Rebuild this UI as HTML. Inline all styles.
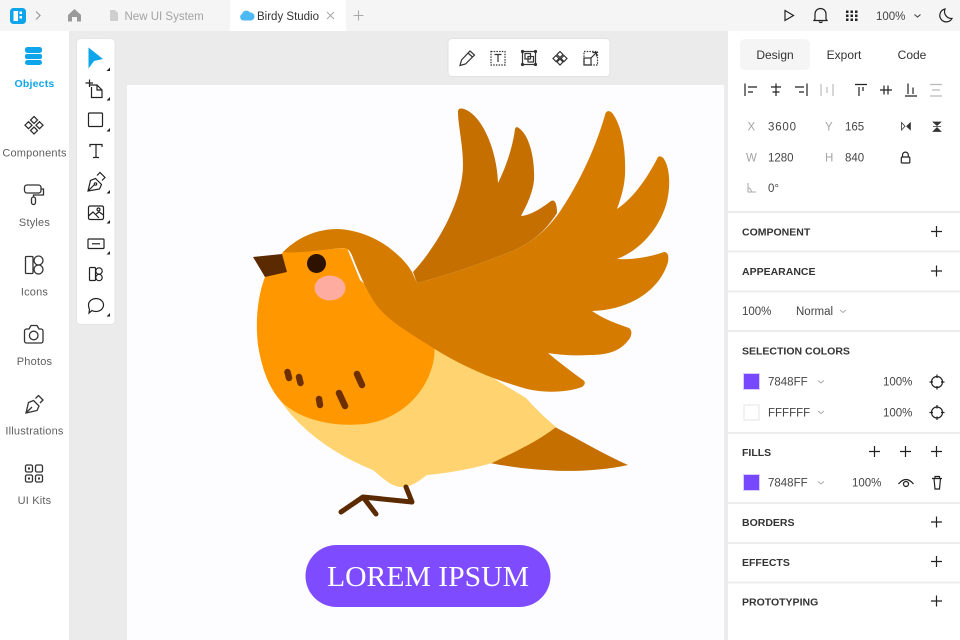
<!DOCTYPE html>
<html><head><meta charset="utf-8"><style>
html,body{margin:0;padding:0}
body{width:960px;height:640px;overflow:hidden;position:relative;background:#ebebeb;font-family:"Liberation Sans",sans-serif}
svg{position:absolute;left:0;top:0}
text{font-family:"Liberation Sans",sans-serif}
</style></head><body>
<svg width="960" height="640" viewBox="0 0 960 640">
<!-- panels -->
<rect x="127" y="85" width="597" height="555" fill="#fdfcff"/>
<rect x="0" y="30" width="69" height="610" fill="#fff"/>
<rect x="728" y="30" width="232" height="610" fill="#fff"/>
<rect x="0" y="0" width="960" height="31" fill="#f5f5f5"/>
<rect x="230" y="0" width="116" height="31" fill="#fff"/>
<rect x="76.500" y="38.500" width="38.500" height="286" rx="4" fill="#fff" stroke="#e4e4e4"/>
<rect x="448" y="38.500" width="162" height="38" rx="4" fill="#fff" stroke="#e2e2e2"/>
<rect x="740" y="39" width="70" height="31" rx="5" fill="#f5f5f5"/>
<g fill="#ececec"><rect x="728" y="211" width="232" height="2"/><rect x="728" y="250.500" width="232" height="2"/><rect x="728" y="290.500" width="232" height="2"/><rect x="728" y="330" width="232" height="2"/><rect x="728" y="432" width="232" height="2"/><rect x="728" y="502" width="232" height="2"/><rect x="728" y="542" width="232" height="2"/><rect x="728" y="581.500" width="232" height="2"/></g>

<!-- bird -->
<path d="M490 463C515 452 538 440 555 427C580 440 605 455 628 465C600 471 570 472 545 470C525 469 505 466 490 463Z" fill="#c46f00"/>
<path d="M280 400C300 430 335 455 373 470C385 480 392 487 402 487C412 487 420 480 427 475C450 473 475 468 492 463C515 452 540 440 556 427C545 418 535 408 526 398L430 340Z" fill="#ffd36f"/>
<path d="M265 277C258 295 255 320 258 345C262 370 270 392 285 405C305 421 335 427 365 424C395 420 420 400 430 373C435 360 435 350 434 345L360 280L347 248L283 252Z" fill="#ff9800"/>
<path d="M413 272C438 245 463 200 463 165C463 145 458 125 458 112C458 108 461 108 464 109C482 115 497 150 498 183C507 165 513 145 515 129C516 126 518 127 520 129C530 137 535 160 534 180C533 192 527 205 521 216C532 215 543 207 551 201C555 199 557 204 557 213C545 232 530 244 510 252C480 264 445 276 417 283Z" fill="#c46f00"/>
<path d="M283 252C300 235 320 229 338 229C360 230 380 240 392 250C402 258 408 265 412 272L417 283C445 276 480 264 510 252C530 244 545 232 559 213C578 185 595 150 605 115C606 110 610 110 613 114C622 127 626 150 625 175C624 190 620 200 617 209C635 197 648 176 657 159C658 155 662 156 664 159C670 168 671 188 666 205C658 230 640 250 617 259C632 260 650 257 664 252C668 252 669 256 668 262C660 290 630 310 592 311C605 320 618 324 629 328C632 330 632 334 630 338C622 350 610 355 590 355C575 356 560 355 548 353C560 363 572 372 583 380C586 382 585 385 582 387C565 393 540 394 517 386C490 378 460 365 433 348C410 333 385 320 373 300C365 287 360 275 355 263C352 255 350 249 345 248C325 249 300 254 283 252Z" fill="#d57c00"/>
<path d="M253 257L282 254L287 272L265 277Z" fill="#5c2a00"/>
<circle cx="316.500" cy="263.500" r="9.500" fill="#2e1200"/>
<ellipse cx="330" cy="288" rx="15.500" ry="12.500" fill="#ffaca0"/>
<g stroke="#6e2f00" stroke-width="6.500" stroke-linecap="round" fill="none">
<path d="M287.500 372L289 378M299 377L300.500 383M319 399L320 405M339 393L345 406M357 374L362 385"/>
</g>
<path d="M406 487L412 502L363 497L341 512M363 497L376 514" fill="none" stroke="#5c2a00" stroke-width="5" stroke-linecap="round" stroke-linejoin="round"/>
<rect x="305.500" y="545" width="245" height="62" rx="31" fill="#7f4bff"/>
<text x="428" y="586" text-anchor="middle" fill="#fff" font-size="29" style="font-family:'Liberation Serif',serif" textLength="202" lengthAdjust="spacingAndGlyphs">LOREM IPSUM</text>

<!-- top bar -->
<rect x="10" y="8" width="16" height="16" rx="3.500" fill="#0ea5ea"/>
<path d="M13.500 11H18V21H13.500ZM19.500 11.500H22V14H19.500ZM19.500 16H22V18.500H19.500Z" fill="#fff"/>
<path d="M36 11.500L40 15.500L36 19.500" fill="none" stroke="#999" stroke-width="1.200"/>
<path d="M68 15L74.500 9L81 15V21.500H77V17H72V21.500H68Z" fill="#9a9a9a"/>
<path d="M110 10H115L118 13V21H110Z" fill="#cfcfcf"/>
<text x="124.500" y="20" font-size="11.500" fill="#a3a3a3">New UI System</text>
<path d="M243 20.500A3.500 3.500 0 0 1 242 14A4.500 4.500 0 0 1 250 12.500A4 4 0 0 1 251 20.500Z" fill="#4cb9f2"/>
<text x="257" y="20" font-size="11.500" fill="#333">Birdy Studio</text>
<path d="M327 12L334 19M334 12L327 19" stroke="#aaa" stroke-width="1.100"/>
<path d="M358.500 10.500V20.500M353.500 15.500H363.500" stroke="#aaa" stroke-width="1.100"/>
<path d="M785 10.500L793.500 15.500L785 20.500Z" fill="none" stroke="#222" stroke-width="1.200"/>
<path d="M815 19V14A5 5 0 0 1 826 14V19L827 20.500H814ZM819 21.500A2 2 0 0 0 822.500 21.500" fill="none" stroke="#222" stroke-width="1.200"/>
<g fill="#222"><rect x="846" y="10.500" width="2.500" height="2.500"/><rect x="850.500" y="10.500" width="2.500" height="2.500"/><rect x="855" y="10.500" width="2.500" height="2.500"/><rect x="846" y="14.500" width="2.500" height="2.500"/><rect x="850.500" y="14.500" width="2.500" height="2.500"/><rect x="855" y="14.500" width="2.500" height="2.500"/><rect x="846" y="18.500" width="2.500" height="2.500"/><rect x="850.500" y="18.500" width="2.500" height="2.500"/><rect x="855" y="18.500" width="2.500" height="2.500"/></g>
<text x="876" y="20" font-size="11.500" fill="#444">100%</text>
<path d="M914.500 14.500L917.500 17L920.500 14.500" fill="none" stroke="#444" stroke-width="1.100"/>
<path d="M945 9A6.500 6.500 0 1 0 952 18.500A7 7 0 0 1 945 9Z" fill="none" stroke="#222" stroke-width="1.200"/>

<!-- left nav -->
<g fill="#0ea5ea"><rect x="25" y="47" width="17" height="6" rx="2.500"/><rect x="25" y="54" width="17" height="5" rx="2"/><rect x="25" y="60" width="17" height="5" rx="2.500"/></g>
<g font-size="11" letter-spacing=".2" text-anchor="middle" fill="#5f5f5f">
<text x="34.500" y="87" fill="#0ea5ea" font-weight="bold" font-size="10.500">Objects</text>
<text x="34.500" y="156.500">Components</text>
<text x="34.500" y="226">Styles</text>
<text x="34.500" y="295.500">Icons</text>
<text x="34.500" y="365">Photos</text>
<text x="34.500" y="434.500">Illustrations</text>
<text x="34.500" y="504">UI Kits</text>
</g>
<g fill="none" stroke="#333" stroke-width="1.300">
<path d="M34 116.500L37.500 120L34 123.500L30.500 120ZM34 127L37.500 130.500L34 134L30.500 130.500ZM28.500 121.700L32 125.200L28.500 128.700L25 125.200ZM39.500 121.700L43 125.200L39.500 128.700L36 125.200Z"/>
<rect x="24.500" y="185" width="16.500" height="8" rx="2.500"/><path d="M41 189H43.500V195H33.500V197"/><rect x="31.500" y="197" width="4" height="7.500" rx="2"/>
<rect x="25.500" y="256.500" width="7.500" height="17" rx="1"/><circle cx="38.500" cy="260.500" r="4.500"/><circle cx="38.500" cy="269.500" r="4.500"/>
<path d="M24.500 331a2 2 0 0 1 2-2H29L31 325.500H37L39 329H41a2 2 0 0 1 2 2V341a2 2 0 0 1-2 2H26.500a2 2 0 0 1-2-2Z" stroke-linejoin="round"/><circle cx="33.700" cy="335.500" r="4.300"/>
<path d="M33.500 400.500L39 406L37 410.500L26 413L28.500 402.500ZM35.500 398.500L38.500 395.500L43 400L40 403M26.500 412.500L32 407"/>
<rect x="25.500" y="465" width="7" height="7" rx="1.500"/><rect x="35.500" y="465" width="7" height="7" rx="1.500"/><rect x="25.500" y="475" width="7" height="7" rx="1.500"/><rect x="35.500" y="475" width="7" height="7" rx="1.500"/>
</g>
<g fill="#333"><rect x="28" y="467.500" width="2" height="2"/><rect x="28" y="477.500" width="2" height="2"/><rect x="38" y="477.500" width="2" height="2"/></g>

<!-- tool strip -->
<path d="M88.500 47.500L103 59L94 61L88.500 68.500Z" fill="#0ea5ea"/>
<g fill="none" stroke="#222" stroke-width="1.200">
<path d="M90 85H97L102 90V97.500H91.500V87M97 85V90H102M89.500 79.500V87M85.500 83H93"/>
<rect x="88.500" y="113" width="14" height="13.500" rx="1"/>
<path d="M90 147V144.500H102V147M96 144.500V157.500M93 157.500H99"/>
<path d="M95.500 178.500L101.500 184.500L99.500 189L88 191L90.500 180.500ZM97 175.500L100 172.500L105 177.500L102 180.500M88.500 190.500L94.500 184.500"/><circle cx="95.500" cy="184" r="1.200"/>
<rect x="88.500" y="206" width="15" height="13.500" rx="1.500"/><path d="M88.500 216L93 212L99 218M96 214L99 212L103.500 215"/><circle cx="98.500" cy="209.500" r="1.500"/>
<rect x="88" y="239" width="16" height="9.500" rx="1"/><path d="M92 243.800H100"/>
<rect x="89.500" y="267.500" width="6" height="13" rx="1"/><circle cx="99" cy="271" r="3.200"/><circle cx="99" cy="277.500" r="3.200"/>
<path d="M88.500 305A7.500 6.500 0 1 1 92 310.500L89 313L89.500 309.500Q88.500 307.500 88.500 305Z"/>
</g>
<g fill="#222"><path d="M110 67.500V71H106.500Z"/><path d="M110 97V100.500H106.500Z"/><path d="M110 128V131.500H106.500Z"/><path d="M110 190V193.500H106.500Z"/><path d="M110 220V223.500H106.500Z"/><path d="M110 251V254.500H106.500Z"/><path d="M110 313V316.500H106.500Z"/></g>

<!-- top float tools -->
<g fill="none" stroke="#333" stroke-width="1.200">
<path d="M460 65.500L461.500 60L470 51L474.500 55L465.500 64ZM468 53L472.500 57"/>
<rect x="491" y="51.500" width="14" height="13.500" stroke-dasharray="1.500 1.200"/><path d="M494.500 54.500H501.500M498 54.500V62"/>
<rect x="522.500" y="51.500" width="13" height="13"/><rect x="525" y="53.500" width="5.500" height="5.500"/><rect x="528" y="56.500" width="5.500" height="5.500"/>
<path d="M560 51.500L563 54.500L560 57.500L557 54.500ZM560 59L563 62L560 65L557 62ZM556 55.500L559 58.500L556 61.500L553 58.500ZM564 55.500L567 58.500L564 61.500L561 58.500Z"/>
<rect x="584" y="51.500" width="13.500" height="13.500" stroke-dasharray="1.500 1.200"/><rect x="584" y="58" width="7" height="7"/><path d="M591 58L596 53M592.500 52.500H596.500V56.500"/>
</g>
<g fill="#333"><circle cx="522.500" cy="51.500" r="1.600"/><circle cx="535.500" cy="51.500" r="1.600"/><circle cx="522.500" cy="64.500" r="1.600"/><circle cx="535.500" cy="64.500" r="1.600"/></g>

<!-- right panel -->
<g font-size="12" fill="#333">
<text x="775" y="59" text-anchor="middle">Design</text>
<text x="844" y="59" text-anchor="middle">Export</text>
<text x="912" y="59" text-anchor="middle">Code</text>
</g>
<g fill="none" stroke="#222" stroke-width="1.200">
<path d="M745 83.500V96M748 87H757M748 92H753"/>
<path d="M776 83.500V96M771 87H781M772.500 92H779.500"/>
<path d="M807 83.500V96M795 87H804M799 92H804"/>
<path d="M821 84V96M833 84V96M827 87V93" stroke="#bbb"/>
<path d="M855 84.500H867M859 87V96M863 87V91"/>
<path d="M880 90H892M884 85.500V94.500M888 85.500V94.500"/>
<path d="M905 96H917M908 83.500V94M913 87.500V94"/>
<path d="M930 84.500H942M930 96H942M932 90H940" stroke="#bbb"/>
</g>
<g font-size="11.500" fill="#444">
<text x="768" y="130.500" letter-spacing=".8">3600</text><text x="845" y="130.500">165</text>
<text x="768" y="161.500">1280</text><text x="845" y="161.500">840</text>
<text x="768" y="192">0°</text>
<text x="742" y="315">100%</text><text x="796" y="315">Normal</text>
<text x="768" y="385.500">7848FF</text><text x="883" y="385.500">100%</text>
<text x="768" y="416.500">FFFFFF</text><text x="883" y="416.500">100%</text>
<text x="768" y="486.500">7848FF</text><text x="852" y="486.500">100%</text>
</g>
<g font-size="11.500" fill="#a5a5a5">
<text x="747.500" y="130.500">X</text><text x="825" y="130.500">Y</text>
<text x="746" y="161.500">W</text><text x="825" y="161.500">H</text>
</g>
<path d="M748 183V192H756M748 188Q751 188 751.500 192" fill="none" stroke="#aaa" stroke-width="1"/>
<path d="M901.500 122.500V130L905 126.300Z" fill="none" stroke="#333" stroke-width=".8"/>
<path d="M906.500 126.300L910.500 122.500V130Z" fill="#333" stroke="#333" stroke-width=".6"/>
<path d="M933 122H941L937 125.500ZM933 131.500H941L937 127.500ZM933 126.500H941" fill="#333" stroke="#333" stroke-width=".7"/>
<path d="M902.500 157V155A2.900 2.900 0 0 1 908.300 155V157" fill="none" stroke="#222" stroke-width="1.200"/>
<rect x="901.300" y="157" width="8.500" height="6" rx="1" fill="none" stroke="#222" stroke-width="1.200"/>
<g font-size="10.500" font-weight="bold" fill="#333">
<text x="742" y="235.500">COMPONENT</text>
<text x="742" y="275">APPEARANCE</text>
<text x="742" y="354.500">SELECTION COLORS</text>
<text x="742" y="456">FILLS</text>
<text x="742" y="526">BORDERS</text>
<text x="742" y="566">EFFECTS</text>
<text x="742" y="605.500">PROTOTYPING</text>
</g>
<path d="M936.500 226V237M931 231.500H942M936.500 265.500V276.500M931 271H942M936.500 516.500V527.500M931 522H942M936.500 556V567M931 561.500H942M936.500 595.500V606.500M931 601H942M874.500 446V457M869 451.500H880M905.500 446V457M900 451.500H911M936.500 446V457M931 451.500H942" stroke="#222" stroke-width="1.200" fill="none"/>
<rect x="744" y="374" width="15" height="15" fill="#7848ff"/>
<rect x="743.500" y="373.500" width="16" height="16" fill="none" stroke="#d9ccff"/>
<rect x="744" y="405" width="15" height="15" fill="#fff" stroke="#e6e6e6"/>
<rect x="744" y="475" width="15" height="15" fill="#7848ff"/>
<rect x="743.500" y="474.500" width="16" height="16" fill="none" stroke="#d9ccff"/>
<path d="M818 380.500L821 383L824 380.500M818 411L821 413.500L824 411M818 481.500L821 484L824 481.500M840 310L843 312.500L846 310" fill="none" stroke="#aaa" stroke-width="1"/>
<g fill="none" stroke="#222" stroke-width="1.200">
<circle cx="937" cy="382" r="5.500"/><path d="M937 374.500V378M937 386V389.500M929.500 382H933M941 382H944.500"/>
<circle cx="937" cy="412.500" r="5.500"/><path d="M937 405V408.500M937 416.500V420M929.500 412.500H933M941 412.500H944.500"/>
<path d="M898.500 484Q906 475 913.500 484"/><circle cx="906" cy="484" r="2.500"/>
<path d="M932 478.500H942M934 478.500L935 489H939.500L940.500 478.500M935 478.500V476.500H939.500V478.500"/>
</g>
</svg>
</body></html>
